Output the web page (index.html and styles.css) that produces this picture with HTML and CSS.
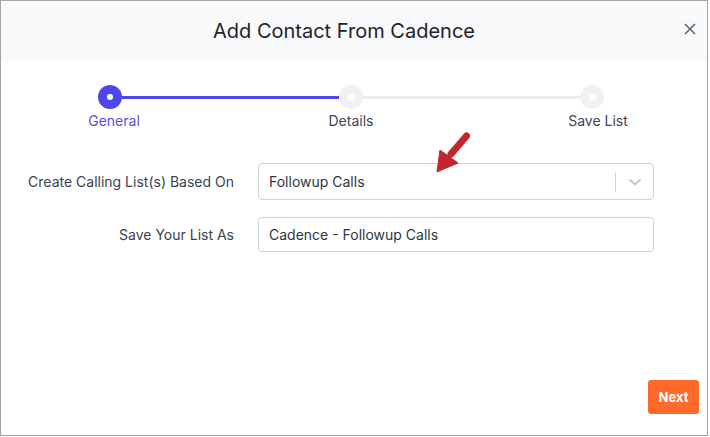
FILE: index.html
```html
<!DOCTYPE html>
<html>
<head>
<meta charset="utf-8">
<link rel="stylesheet" href="styles.css">
</head>
<body>
<div class="modal">
  <div class="header">
    <h1 class="title">Add Contact From Cadence</h1>
    <span class="close">
      <svg width="12" height="12" viewBox="0 0 12 12"><path d="M1 1L11 11M11 1L1 11" stroke="#5f6673" stroke-width="1.6" fill="none"/></svg>
    </span>
  </div>
  <div class="body">
    <div class="stepper">
      <div class="dot active"><span></span></div>
      <div class="line done"></div>
      <div class="dot"><span></span></div>
      <div class="line"></div>
      <div class="dot"><span></span></div>
    </div>
    <div class="step-labels">
      <div class="lbl active l1">General</div>
      <div class="lbl l2">Details</div>
      <div class="lbl l3">Save List</div>
    </div>
    <div class="form">
      <div class="row r1">
        <label class="flabel">Create Calling List(s) Based On</label>
        <div class="select">
          <span class="val">Followup Calls</span>
          <span class="sep"></span>
          <span class="chev"><svg width="14" height="8" viewBox="0 0 14 8"><path d="M1.5 1.5L7 6.5L12.5 1.5" stroke="#c4c7cc" stroke-width="2" fill="none"/></svg></span>
        </div>
      </div>
      <div class="row r2">
        <label class="flabel">Save Your List As</label>
        <div class="input">Cadence - Followup Calls</div>
      </div>
    </div>
    <div class="footer">
      <button class="next">Next</button>
    </div>
    <svg class="arrow" width="44" height="46" viewBox="0 0 44 46">
      <path d="M35.5 6L20 24" stroke="#c1272d" stroke-width="7" stroke-linecap="round" fill="none"/>
      <path d="M6 42L9 20L27 33Z" fill="#c1272d" stroke="#c1272d" stroke-width="1" stroke-linejoin="round"/>
    </svg>
  </div>
</div>
</body>
</html>
```
FILE: styles.css
```css
* { box-sizing: border-box; }
html, body { margin: 0; padding: 0; background: #fff; }
body { font-family: Inter, "Noto Sans", sans-serif; width: 710px; height: 437px; overflow: hidden; }
.modal {
  width: 708px; height: 436px;
  border: 1px solid #a4a4a4;
  background: #fff;
  position: relative;
}
.header {
  height: 60px;
  background: #f8f9fb;
  display: flex; align-items: center; justify-content: center;
  position: relative;
  padding-right: 20px;
}
.title {
  margin: 0; font-weight: 400; font-size: 20px; color: #1f2329;
  padding-bottom: 1px;
}
.close { position: absolute; right: 11px; top: 22px; display: flex; }
.body { position: relative; height: 374px; }
.stepper {
  display: flex; align-items: center;
  padding-left: 97px; padding-top: 24px;
  width: 603px;
}
.dot {
  width: 24px; height: 24px; border-radius: 50%;
  background: #f0f1f5;
  display: flex; align-items: center; justify-content: center;
  flex: none;
}
.dot span { width: 7px; height: 7px; border-radius: 50%; background: #fff; }
.dot.active { background: #4f46ea; }
.dot.active span { width: 6px; height: 6px; }
.line { flex: 1; height: 3px; background: #ebecef; }
.line.done { background: #4f46ea; }
.step-labels { display: flex; margin-top: 1px; height: 20px; align-items: center; font-size: 14px; color: #3d4556; }
.lbl { width: 80px; text-align: center; }
.lbl.active { color: #5a4fe6; }
.l1 { margin-left: 73px; }
.l2 { margin-left: 157px; }
.l3 { margin-left: 167px; }
.form { margin-top: 33px; }
.row { display: flex; align-items: center; }
.r2 { margin-top: 17px; }
.flabel { width: 233px; text-align: right; font-size: 14px; color: #3a4252; }
.select, .input {
  margin-left: 24px; width: 396px;
  border: 1px solid #cfd3d9; border-radius: 4px;
  font-size: 14px; color: #2f3542;
  display: flex; align-items: center;
}
.select { height: 37px; padding-left: 10px; }
.input { height: 35px; padding-left: 10px; }
.val { flex: 1; }
.sep { width: 1px; height: 20px; background: #d3d5d9; }
.chev { width: 37px; display: flex; justify-content: center; align-items: center; padding-top: 1px; }
.footer { position: absolute; right: 8px; bottom: 21px; }
.next {
  width: 51px; height: 34px; border: none; border-radius: 3px;
  background: #ff6a2b; color: #fff; font-family: Inter, sans-serif;
  font-weight: 700; font-size: 13px; padding: 0;
}
.arrow { position: absolute; left: 430px; top: 69px; }
```
